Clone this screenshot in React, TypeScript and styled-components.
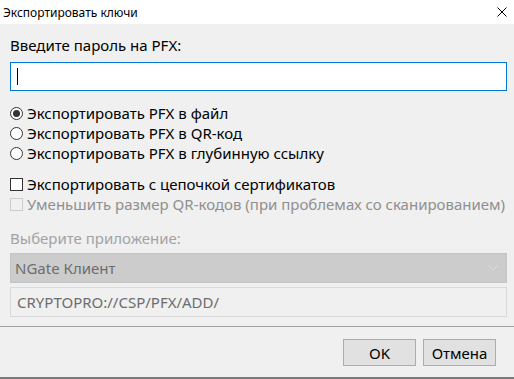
import React from "react";
import styled, { createGlobalStyle } from "styled-components";

const Global = createGlobalStyle`
  html, body { margin: 0; padding: 0; background: #f0f0f0; }
  * { box-sizing: border-box; }
`;

const FONT = `"Noto Sans", "Open Sans", sans-serif`;

const Window = styled.div`
  width: 514px;
  height: 379px;
  background: #f0f0f0;
  font-family: ${FONT};
  display: flex;
  flex-direction: column;
  border-bottom: 2px solid #7a7a7a;
  overflow: hidden;
`;

const TitleBar = styled.div`
  height: 24px;
  background: #ffffff;
  display: flex;
  align-items: center;
  justify-content: space-between;
  padding: 0 7px 0 3px;
  font-size: 12px;
  color: #000;
`;

const Body = styled.div`
  display: flex;
  flex-direction: column;
  padding: 11px 7px 0 10px;
`;

const Label = styled.div<{ $disabled?: boolean }>`
  font-size: 15px;
  line-height: 20px;
  color: ${(p) => (p.$disabled ? "#a3a3a3" : "#000")};
`;

const PasswordBox = styled.div`
  margin-top: 7px;
  height: 29px;
  background: #fff;
  border: 1px solid #0078d7;
  display: flex;
  align-items: center;
  padding-left: 6px;
`;

const Caret = styled.div`
  width: 1px;
  height: 17px;
  background: #000;
`;

const Group = styled.div<{ $mt: number }>`
  display: flex;
  flex-direction: column;
  margin-top: ${(p) => p.$mt}px;
`;

const OptionRow = styled.div<{ $disabled?: boolean }>`
  height: 20px;
  display: flex;
  align-items: center;
  gap: 4px;
  font-size: 15px;
  color: ${(p) => (p.$disabled ? "#8f8f8f" : "#000")};
`;

const RadioCircle = styled.span<{ $checked?: boolean }>`
  width: 13px;
  height: 13px;
  border-radius: 50%;
  border: 1px solid #333;
  background: #fff;
  display: flex;
  align-items: center;
  justify-content: center;
  flex: none;
  &::after {
    content: "";
    display: ${(p) => (p.$checked ? "block" : "none")};
    width: 7px;
    height: 7px;
    border-radius: 50%;
    background: #333;
  }
`;

const CheckSquare = styled.span<{ $disabled?: boolean }>`
  width: 13px;
  height: 13px;
  border: 1px solid ${(p) => (p.$disabled ? "#cccccc" : "#333")};
  background: ${(p) => (p.$disabled ? "#f0f0f0" : "#fff")};
  flex: none;
`;

const Select = styled.div`
  margin-top: 5px;
  height: 30px;
  background: #cccccc;
  border: 1px solid #c4c4c4;
  display: flex;
  align-items: center;
  justify-content: space-between;
  padding: 0 8px 0 4px;
  font-size: 15px;
  color: #6d6d6d;
`;

const Field = styled.div`
  margin-top: 4px;
  height: 30px;
  border: 1px solid #d9d9d9;
  background: #f0f0f0;
  display: flex;
  align-items: center;
  padding-left: 6px;
  font-size: 15px;
  color: #6d6d6d;
`;

const Separator = styled.div`
  margin-top: 9px;
  height: 1px;
  background: #a0a0a0;
`;

const Footer = styled.div`
  display: flex;
  justify-content: flex-end;
  gap: 7px;
  padding: 12px 18px 0 0;
`;

const Button = styled.button`
  width: 73px;
  height: 27px;
  background: #e1e1e1;
  border: 1px solid #adadad;
  font-family: ${FONT};
  font-size: 15px;
  color: #000;
  padding: 0;
`;

export default function App() {
  return (
    <>
      <Global />
      <Window>
        <TitleBar>
          <span>Экспортировать ключи</span>
          <svg width="10" height="10" viewBox="0 0 10 10">
            <path d="M0.5 0.5 L9.5 9.5 M9.5 0.5 L0.5 9.5" stroke="#000" strokeWidth="1" />
          </svg>
        </TitleBar>
        <Body>
          <Label>Введите пароль на PFX:</Label>
          <PasswordBox>
            <Caret />
          </PasswordBox>
          <Group $mt={12}>
            <OptionRow>
              <RadioCircle $checked />
              Экспортировать PFX в файл
            </OptionRow>
            <OptionRow>
              <RadioCircle />
              Экспортировать PFX в QR-код
            </OptionRow>
            <OptionRow>
              <RadioCircle />
              Экспортировать PFX в глубинную ссылку
            </OptionRow>
          </Group>
          <Group $mt={11}>
            <OptionRow>
              <CheckSquare />
              Экспортировать с цепочкой сертификатов
            </OptionRow>
            <OptionRow $disabled>
              <CheckSquare $disabled />
              Уменьшить размер QR-кодов (при проблемах со сканированием)
            </OptionRow>
          </Group>
          <Group $mt={14}>
            <Label $disabled>Выберите приложение:</Label>
          </Group>
          <Select>
            <span>NGate Клиент</span>
            <svg width="10" height="6" viewBox="0 0 10 6">
              <path d="M0.5 0.5 L5 5 L9.5 0.5" stroke="#dedede" fill="none" strokeWidth="1" />
            </svg>
          </Select>
          <Field>CRYPTOPRO://CSP/PFX/ADD/</Field>
        </Body>
        <Separator />
        <Footer>
          <Button>OK</Button>
          <Button>Отмена</Button>
        </Footer>
      </Window>
    </>
  );
}
